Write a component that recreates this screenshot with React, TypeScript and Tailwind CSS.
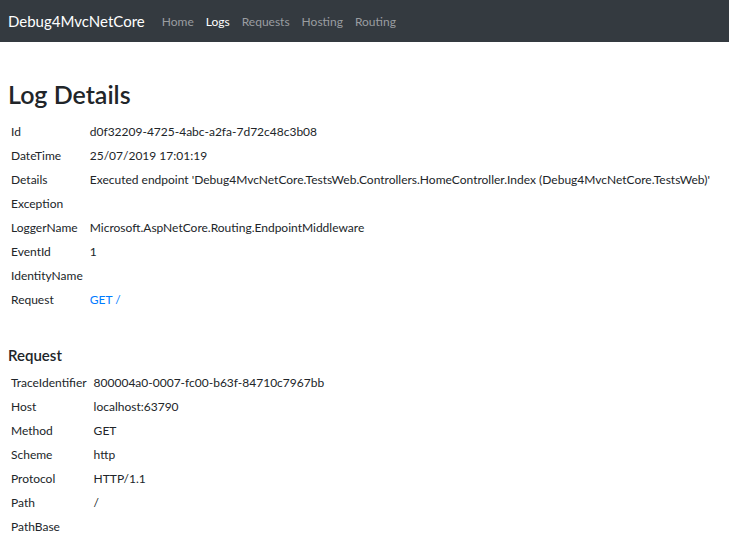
import React from 'react';

const logRows: [string, string, boolean?][] = [
  ['Id', 'd0f32209-4725-4abc-a2fa-7d72c48c3b08'],
  ['DateTime', '25/07/2019 17:01:19'],
  [
    'Details',
    "Executed endpoint 'Debug4MvcNetCore.TestsWeb.Controllers.HomeController.Index (Debug4MvcNetCore.TestsWeb)'",
  ],
  ['Exception', ''],
  ['LoggerName', 'Microsoft.AspNetCore.Routing.EndpointMiddleware'],
  ['EventId', '1'],
  ['IdentityName', ''],
  ['Request', 'GET /', true],
];

const requestRows: [string, string][] = [
  ['TraceIdentifier', '800004a0-0007-fc00-b63f-84710c7967bb'],
  ['Host', 'localhost:63790'],
  ['Method', 'GET'],
  ['Scheme', 'http'],
  ['Protocol', 'HTTP/1.1'],
  ['Path', '/'],
  ['PathBase', ''],
];

const DetailTable = ({ rows }: { rows: [string, string, boolean?][] }) => (
  <table className="border-collapse text-[12px] leading-[18px]">
    <tbody>
      {rows.map(([key, value, link]) => (
        <tr key={key}>
          <td className="pl-[3px] pr-[4px] py-[3px] align-top whitespace-nowrap">{key}</td>
          <td className="px-[3px] py-[3px] align-top whitespace-nowrap">
            {link ? <a href="#" className="text-[#007bff]">{value}</a> : value}
          </td>
        </tr>
      ))}
    </tbody>
  </table>
);

export default function App() {
  return (
    <div className="min-h-screen bg-white text-[#212529]" style={{ fontFamily: 'Lato, sans-serif' }}>
      {/* navbar */}
      <nav className="flex h-[42px] items-center bg-[#343a40] px-2">
        <a href="#" className="mr-[17px] pt-[1px] text-[15px] text-white">Debug4MvcNetCore</a>
        <ul className="flex gap-[12px] pt-[1px] text-[12px] text-[#9a9da0]">
          <li>Home</li>
          <li className="text-white">Logs</li>
          <li>Requests</li>
          <li>Hosting</li>
          <li>Routing</li>
        </ul>
      </nav>

      <main className="px-2">
        <h1 className="mt-[36px] mb-[10px] text-[25px] font-semibold leading-[32px]">Log Details</h1>
        <DetailTable rows={logRows} />

        <h4 className="mt-[33px] mb-[6px] text-[15px] font-semibold leading-[20px]">Request</h4>
        <DetailTable rows={requestRows} />
      </main>
    </div>
  );
}
